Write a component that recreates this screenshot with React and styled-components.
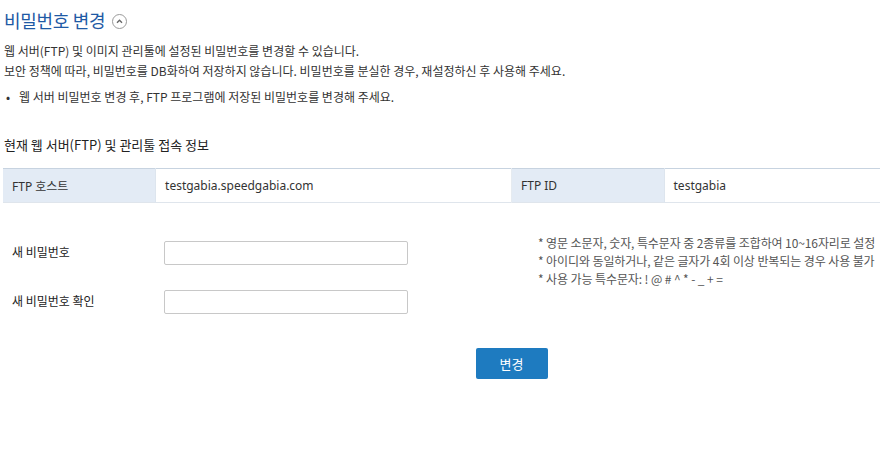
import React, { useState } from 'react';
import styled, { createGlobalStyle } from 'styled-components';

const GlobalStyle = createGlobalStyle`
	html, body { margin: 0; padding: 0; background: #fff; overflow: hidden; }
	body { font-family: "Noto Sans CJK KR", "Noto Sans", sans-serif; color: #333; }
`;

const Page = styled.div`
	width: 1017px;
	margin-left: 3px;
	padding-top: 6px;
`;

const TitleRow = styled.div`
	display: flex;
	align-items: center;
	gap: 7px;
	padding-left: 1px;
	height: 28px;

	h2 {
		margin: 0;
		font-size: 18px;
		font-weight: 400;
		color: #1f5aa5;
		letter-spacing: -0.3px;
	}
`;

const ToggleButton = styled.button`
	width: 15px;
	height: 15px;
	padding: 0;
	border: 1px solid #9a9a9a;
	border-radius: 50%;
	background: #fff;
	display: flex;
	align-items: center;
	justify-content: center;
	margin-top: 3px;
`;

const Desc = styled.div`
	margin-top: 7px;
	padding-left: 1px;
	font-size: 12px;
	line-height: 20px;
	p { margin: 0; }
`;

const BulletList = styled.ul`
	margin: 6px 0 0;
	padding: 0 0 0 1px;
	list-style: none;
	font-size: 12px;
	line-height: 20px;

	li::before {
		content: "•";
		display: inline-block;
		width: 13px;
		padding-left: 2px;
	}
`;

const SectionTitle = styled.h3`
	margin: 28px 0 0;
	padding-left: 1px;
	font-size: 13px;
	font-weight: 400;
	line-height: 20px;
	color: #222;
`;

const InfoTable = styled.table`
	width: 100%;
	margin-top: 13px;
	border-collapse: collapse;
	border-top: 1px solid #c7d3e0;
	border-bottom: 1px solid #dfe5ec;
	font-family: "Noto Sans", "Noto Sans CJK KR", sans-serif;
	font-size: 12px;
	color: #333;
`;

const Th = styled.th`
	width: 15%;
	height: 33px;
	padding: 0 9px;
	background: #e3ebf5;
	font-weight: 400;
	text-align: left;
	border-right: 1px solid #dde5ee;
`;

const Td = styled.td`
	width: 35%;
	padding: 0 9px;
	text-align: left;
	border-right: 1px solid #e6ebf0;
	&:last-child { border-right: none; }
`;

const FormArea = styled.div`
	display: flex;
	margin-top: 31px;
`;

const FormFields = styled.div`
	width: 535px;
	display: flex;
	flex-direction: column;
	gap: 25px;
	padding-top: 7px;
`;

const FieldRow = styled.label`
	display: flex;
	align-items: center;
	font-size: 12px;
	color: #222;

	span {
		width: 152px;
		padding-left: 9px;
		margin-top: -4px;
	}
`;

const TextInput = styled.input`
	width: 244px;
	height: 24px;
	box-sizing: border-box;
	border: 1px solid #c8c8c8;
	border-radius: 2px;
	padding: 0 6px;
	font-size: 12px;
	outline: none;
`;

const Notes = styled.ul`
	margin: 0;
	padding: 0;
	list-style: none;
	font-size: 12px;
	line-height: 18px;
	color: #555;
	white-space: nowrap;
	letter-spacing: -0.1px;
`;

const ButtonRow = styled.div`
	display: flex;
	justify-content: center;
	margin-top: 34px;
`;

const PrimaryButton = styled.button`
	width: 72px;
	height: 31px;
	border: none;
	border-radius: 2px;
	background: #1e7bc0;
	color: #fff;
	font-family: "Noto Sans CJK KR", sans-serif;
	font-size: 13px;
	cursor: pointer;
`;

export default function App() {
	const [ pw, setPw ] = useState('');
	const [ pwConfirm, setPwConfirm ] = useState('');

	return (
		<Page>
			<GlobalStyle />
			<TitleRow>
				<h2>비밀번호 변경</h2>
				<ToggleButton aria-label="접기">
					<svg width="9" height="9" viewBox="0 0 9 9">
						<path d="M2 5.8 L4.5 3.3 L7 5.8" fill="none" stroke="#666" strokeWidth="1.4" />
					</svg>
				</ToggleButton>
			</TitleRow>

			<Desc>
				<p>웹 서버(FTP) 및 이미지 관리툴에 설정된 비밀번호를 변경할 수 있습니다.</p>
				<p>보안 정책에 따라, 비밀번호를 DB화하여 저장하지 않습니다. 비밀번호를 분실한 경우, 재설정하신 후 사용해 주세요.</p>
			</Desc>
			<BulletList>
				<li>웹 서버 비밀번호 변경 후, FTP 프로그램에 저장된 비밀번호를 변경해 주세요.</li>
			</BulletList>

			<SectionTitle>현재 웹 서버(FTP) 및 관리툴 접속 정보</SectionTitle>
			<InfoTable>
				<tbody>
					<tr>
						<Th>FTP 호스트</Th>
						<Td>testgabia.speedgabia.com</Td>
						<Th>FTP ID</Th>
						<Td>testgabia</Td>
					</tr>
				</tbody>
			</InfoTable>

			<FormArea>
				<FormFields>
					<FieldRow>
						<span>새 비밀번호</span>
						<TextInput type="password" value={pw} onChange={(e) => setPw(e.target.value)} />
					</FieldRow>
					<FieldRow>
						<span>새 비밀번호 확인</span>
						<TextInput type="password" value={pwConfirm} onChange={(e) => setPwConfirm(e.target.value)} />
					</FieldRow>
				</FormFields>
				<Notes>
					<li>* 영문 소문자, 숫자, 특수문자 중 2종류를 조합하여 10~16자리로 설정</li>
					<li>* 아이디와 동일하거나, 같은 글자가 4회 이상 반복되는 경우 사용 불가</li>
					<li>* 사용 가능 특수문자: ! @ # ^ * - _ + =</li>
				</Notes>
			</FormArea>

			<ButtonRow>
				<PrimaryButton>변경</PrimaryButton>
			</ButtonRow>
		</Page>
	);
}
